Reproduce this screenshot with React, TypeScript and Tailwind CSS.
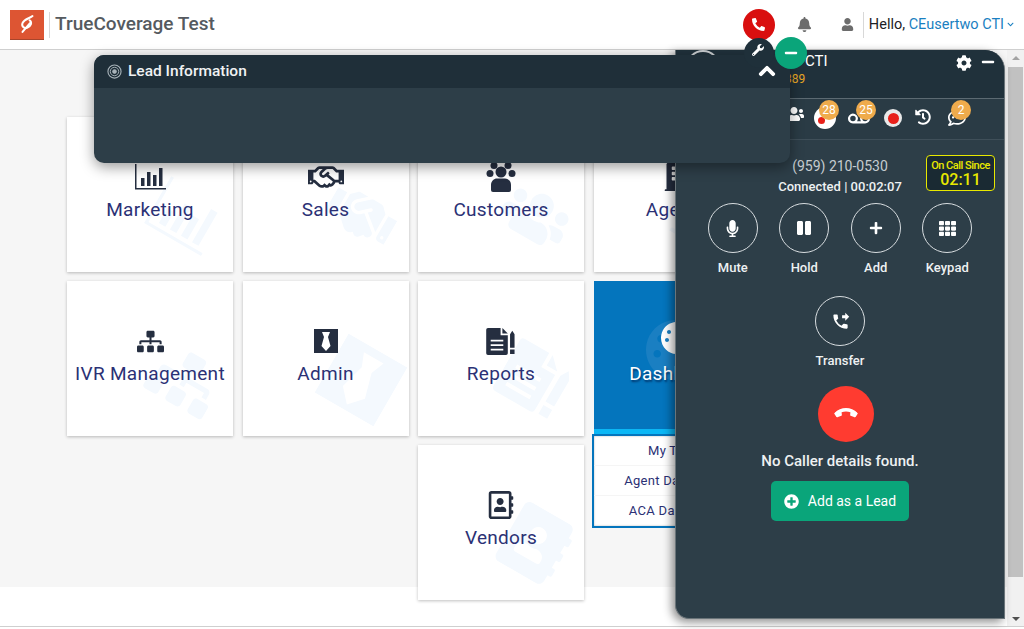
import type { ComponentType } from 'react';
import {
  FaAddressBook, FaBell, FaBuilding, FaChevronDown, FaChevronUp, FaCog, FaHandshake, FaHistory, FaMicrophone, FaMinus,
  FaPalette, FaPause, FaPhoneAlt, FaPlus, FaPlusCircle, FaRegAddressBook, FaRegCommentDots, FaRegHandshake, FaSitemap,
  FaTh, FaUser, FaUsers, FaVoicemail, FaWrench,
} from 'react-icons/fa';
import { MdPhoneForwarded } from 'react-icons/md';

type IconProps = { className?: string };

function ChartIcon({ className }: IconProps) {
  return (
    <svg viewBox="0 0 32 26" className={className} fill="currentColor">
      <path d="M1 0h1.500v24H32v1.500H1z" />
      <rect x="7" y="14" width="3.500" height="8" />
      <rect x="13" y="8" width="3.500" height="14" />
      <rect x="19" y="11" width="3.500" height="11" />
      <rect x="25" y="4" width="3.500" height="18" />
    </svg>
  );
}

function TieIcon({ className }: IconProps) {
  return (
    <svg viewBox="0 0 24 24" className={className} fill="currentColor">
      <path fillRule="evenodd" d="M0 0h24v24H0zM8 3l2 5-2.500 9 4.500 5 4.500-5-2.500-9 2-5z" />
    </svg>
  );
}

function ReportIcon({ className }: IconProps) {
  return (
    <svg viewBox="0 0 34 30" className={className} fill="currentColor">
      <path
        fillRule="evenodd"
        d="M2 0h14v8h8v20a2 2 0 0 1-2 2H2a2 2 0 0 1-2-2V2a2 2 0 0 1 2-2zM5 13v2h14v-2zm0 5v2h14v-2zm0 5v2h14v-2z"
      />
      <path d="M18 0l6 6h-6z" />
      <path d="M29 3l2.500 4v15h-5V7zM26.500 24h5v5h-5z" />
    </svg>
  );
}

function CustomersIcon({ className }: IconProps) {
  return (
    <svg viewBox="0 0 30 30" className={className} fill="currentColor">
      <circle cx="8" cy="3.500" r="3.500" />
      <circle cx="22" cy="3.500" r="3.500" />
      <circle cx="4" cy="11.500" r="3.500" />
      <circle cx="26" cy="11.500" r="3.500" />
      <circle cx="15" cy="10" r="5.500" />
      <path d="M7 30a2 2 0 0 1-2-2v-5c0-4 3-6.500 6-6.500h8c3 0 6 2.500 6 6.500v5a2 2 0 0 1-2 2z" />
    </svg>
  );
}

function LogoMark({ className }: IconProps) {
  return (
    <svg viewBox="0 0 20 24" className={className} fill="none" stroke="#fff" strokeWidth="2.400" strokeLinecap="round">
      <path d="M16 2.500C13 5 6 6 4 11c-1.500 4 2 6.500 5.500 5.500C14 15 16 10 12.500 7.500" />
      <path d="M13 11L4 21.500" />
    </svg>
  );
}

function TargetIcon() {
  return (
    <svg viewBox="0 0 16 16" className="size-[15px]" fill="none" stroke="#a9b4ba">
      <circle cx="8" cy="8" r="7" strokeWidth="1.200" />
      <circle cx="8" cy="8" r="4.500" strokeWidth="1" />
      <circle cx="8" cy="8" r="2" fill="#a9b4ba" />
    </svg>
  );
}

type Card = { label: string; icon: ComponentType<IconProps>; iconClass: string; mark?: ComponentType<IconProps> };

const cards: Card[] = [
  { label: 'Marketing', icon: ChartIcon, iconClass: 'h-[26px] w-[32px]' },
  { label: 'Sales', icon: FaRegHandshake, iconClass: 'size-[36px]', mark: FaHandshake },
  { label: 'Customers', icon: CustomersIcon, iconClass: 'size-[30px]', mark: FaUsers },
  { label: 'Agents', icon: FaBuilding, iconClass: 'size-[28px]' },
  { label: 'IVR Management', icon: FaSitemap, iconClass: 'size-[27px]' },
  { label: 'Admin', icon: TieIcon, iconClass: 'size-[24px]' },
  { label: 'Reports', icon: ReportIcon, iconClass: 'h-[27px] w-[33px]' },
];

function MenuCard({ label, icon: Icon, iconClass, mark }: Card) {
  const Mark = mark ?? Icon;
  return (
    <div className="relative h-[155px] overflow-hidden bg-white shadow-[0_1px_3px_rgba(0,0,0,0.25)]">
      <Mark className="absolute left-[84px] top-[65px] size-[68px] rotate-[30deg] text-[#f4f9fe]" />
      <div className="relative flex h-[126px] flex-col items-center justify-end pb-[21px]">
        <div className="flex h-[36px] items-center text-[#252e40]">
          <Icon className={iconClass} />
        </div>
        <div className="mt-[3px] text-[19px] leading-[24px] tracking-[0.3px] text-[#2b3175]">{label}</div>
      </div>
    </div>
  );
}

function DashboardCard() {
  return (
    <div className="relative h-[153px] border-b-[5px] border-[#0bb7f5] bg-[#0475bd]">
      <FaPalette className="absolute left-[52px] top-[39px] size-[60px] text-[#1a7fc2]" />
      <div className="relative flex h-[126px] flex-col items-center justify-end pb-[21px]">
        <FaPalette className="mb-[8px] size-[32px] text-white" />
        <div className="text-[19px] leading-[24px] tracking-[0.3px] text-white [text-shadow:1px_2px_2px_rgba(0,40,90,0.8)]">
          Dashboard
        </div>
      </div>
      <div className="absolute left-[-2px] top-[153px] h-[94px] w-[170px] border-2 border-[#0475bd] bg-white text-center text-[13px] tracking-[0.3px] text-[#2b3175] shadow-[inset_0_0_2px_rgba(0,0,0,0.3)]">
        <div className="h-[30px] border-b border-[#f5f5f5] pt-[5px]">My Tasks</div>
        <div className="h-[30px] border-b border-[#f5f5f5] pt-[5px]">Agent Dashboard</div>
        <div className="h-[30px] pt-[5px]">ACA Dashboard</div>
      </div>
    </div>
  );
}

function CallAction({ label, icon: Icon, iconClass }: { label: string; icon: ComponentType<IconProps>; iconClass: string }) {
  return (
    <div className="flex w-[71.5px] flex-col items-center">
      <div className="flex size-[50px] items-center justify-center rounded-full border border-[#d8dde0] text-white">
        <Icon className={iconClass} />
      </div>
      <div className="mt-[7px] text-[13px] font-medium leading-[16px] text-[#eef1f2]">{label}</div>
    </div>
  );
}

function Badge({ value, left }: { value: string; left: string }) {
  return (
    <span className={`absolute top-[1px] flex size-[20px] items-center justify-center rounded-full bg-[#efab4c] text-[12px] text-white ${left}`}>
      {value}
    </span>
  );
}

function CtiPanel() {
  return (
    <div className="absolute left-[675px] top-[50px] flex h-[569px] w-[330px] flex-col overflow-hidden rounded-tr-[20px] rounded-bl-[14px] border-r border-b border-l border-[#6a7479] bg-[#2d3e48] shadow-[-3px_3px_10px_rgba(0,0,0,0.45)]">
      <div className="flex h-[49px] shrink-0 items-start border-b border-[#5c6a72] bg-[#20313b]">
        <div className="ml-[10px] size-[34px] rounded-full border-2 border-[#c9cdd0] bg-[#20313b]" />
        <div className="ml-[9px] mt-[1px]">
          <div className="text-[15px] leading-[20px] text-white">CEusertwo CTI</div>
          <div className="ml-[56px] text-[12px] leading-[16px] text-[#e9a826]">389</div>
        </div>
        <FaCog className="absolute left-[280px] top-[5px] size-[16px] text-white" />
        <FaMinus className="absolute left-[305px] top-[5px] size-[14px] text-white" />
      </div>
      <div className="relative flex h-[41px] shrink-0 items-center border-b border-[#3f4f59] bg-[#2a3b45]">
        <FaUsers className="absolute left-[108px] top-[5px] size-[20px] text-white" />
        <div className="absolute left-[138px] top-[8px] size-[22px] rounded-full bg-white">
          <span className="absolute left-[4px] top-[10px] size-[7px] rounded-full bg-[#e8201a]" />
        </div>
        <FaVoicemail className="absolute left-[172px] top-[8px] size-[22px] text-white" />
        <div className="absolute left-[208px] top-[10px] flex size-[18px] items-center justify-center rounded-full bg-[#e9e9e9]">
          <span className="size-[11px] rounded-full bg-[#e8201a]" />
        </div>
        <FaHistory className="absolute left-[239px] top-[10px] size-[16px] text-white" />
        <FaRegCommentDots className="absolute left-[272px] top-[10px] size-[18px] text-white" />
        <Badge value="28" left="left-[143px]" />
        <Badge value="25" left="left-[180px]" />
        <Badge value="2" left="left-[275px]" />
      </div>
      <div className="relative flex flex-col items-center pt-[16px]">
        <div className="text-[14px] leading-[20px] text-[#c5ccd0]">(959) 210-0530</div>
        <div className="mt-[1px] text-[13px] font-medium leading-[19px] text-[#eef1f2]">Connected | 00:02:07</div>
        <div className="absolute left-[250px] top-[15px] flex h-[36px] w-[69px] flex-col items-center rounded-[4px] border border-[#e8e800] bg-[#1a2a33] pt-[3px] text-[#e8e800]">
          <div className="text-[11px] font-medium leading-[13px] tracking-[-0.5px]">On Call Since</div>
          <div className="text-[16px] font-medium leading-[15px]">02:11</div>
        </div>
        <div className="mt-[7px] flex">
          <CallAction label="Mute" icon={FaMicrophone} iconClass="size-[17px]" />
          <CallAction label="Hold" icon={FaPause} iconClass="size-[16px]" />
          <CallAction label="Add" icon={FaPlus} iconClass="size-[14px]" />
          <CallAction label="Keypad" icon={FaTh} iconClass="size-[17px]" />
        </div>
        <div className="mt-[20px]">
          <CallAction label="Transfer" icon={MdPhoneForwarded} iconClass="size-[19px]" />
        </div>
        <div className="ml-[12px] mt-[17px] flex size-[56px] items-center justify-center rounded-full bg-[#ff3b30]">
          <FaPhoneAlt className="size-[18px] rotate-[135deg] text-white" />
        </div>
        <div className="mt-[9px] text-[15px] font-medium leading-[20px] text-[#eef1f2]">No Caller details found.</div>
        <div className="mt-[10px] flex h-[40px] w-[138px] items-center justify-center gap-[9px] rounded-[5px] bg-[#0aa57a] text-[14px] text-white">
          <FaPlusCircle className="size-[15px]" />
          Add as a Lead
        </div>
      </div>
    </div>
  );
}

function LeadPanel() {
  return (
    <div className="absolute left-[94px] top-[55px] h-[108px] w-[696px] overflow-hidden rounded-[10px] bg-[#2d3e48] shadow-[0_4px_14px_rgba(0,0,0,0.4)]">
      <div className="flex h-[33px] items-center gap-[6px] bg-[#1f2f39] pl-[13px] text-[15.5px] font-medium text-[#f0f2f3]">
        <TargetIcon />
        Lead Information
      </div>
    </div>
  );
}

function Scrollbar() {
  return (
    <div className="absolute right-0 top-[50px] flex h-[576px] w-[17px] flex-col items-center bg-[#f1f1f1]">
      <div className="mt-[6px] h-0 w-0 border-x-[4px] border-b-[4px] border-x-transparent border-b-[#a3a3a3]" />
      <div className="mt-[7px] h-[510px] w-[15px] bg-[#c1c1c1]" />
      <div className="mt-auto mb-[5px] h-0 w-0 border-x-[4px] border-t-[4px] border-x-transparent border-t-[#505050]" />
    </div>
  );
}

export default function App() {
  return (
    <div className="relative h-[629px] w-[1024px] overflow-hidden bg-white font-['Roboto',sans-serif]">
      <header className="flex h-[50px] items-center border-b border-[#cfcfcf] bg-white pl-[10px] pr-[10px]">
        <div className="flex h-[30px] w-[34px] items-center justify-center border-b border-[#a8452c] bg-[#dd5533]">
          <LogoMark className="h-[20px] w-[17px]" />
        </div>
        <div className="ml-[5px] h-[26px] w-px bg-[#d8d8d8]" />
        <div className="ml-[5px] text-[19px] font-medium text-[#555a60]">TrueCoverage Test</div>
        <div className="ml-auto flex size-[32px] items-center justify-center rounded-full bg-[#d90f0f] text-white">
          <FaPhoneAlt className="size-[13px]" />
        </div>
        <FaBell className="ml-[22px] size-[15px] text-[#6c6c6c]" />
        <FaUser className="ml-[29px] size-[13px] text-[#6c6c6c]" />
        <div className="ml-[9px] h-[26px] w-px bg-[#d8d8d8]" />
        <div className="ml-[5px] flex items-center whitespace-nowrap text-[14.5px] text-[#1c2024]">
          Hello,&nbsp;<span className="text-[#1a7fc1]">CEusertwo CTI</span>
          <FaChevronDown className="ml-[3px] size-[7px] text-[#1a7fc1]" />
        </div>
      </header>

      <main className="h-[537px] bg-[#f6f6f6] pl-[67px] pt-[67px]">
        <div className="grid w-[693px] grid-cols-[166px_166px_166px_166px] gap-x-[9.500px] gap-y-[9px]">
          {cards.map((card) => (
            <MenuCard key={card.label} {...card} />
          ))}
          <DashboardCard />
          <div className="col-start-3">
            <MenuCard label="Vendors" icon={FaRegAddressBook} iconClass="size-[28px]" mark={FaAddressBook} />
          </div>
        </div>
      </main>
      <div className="absolute bottom-[2px] left-0 h-px w-full bg-[#cfcfcf]" />

      <Scrollbar />
      <CtiPanel />
      <LeadPanel />

      <div className="absolute left-[744px] top-[38px] flex size-[30px] items-center justify-center rounded-full bg-[#1f303a] text-white">
        <FaWrench className="size-[12px] translate-x-[-1px] translate-y-[-3px]" />
      </div>
      <div className="absolute left-[775px] top-[37px] flex size-[32px] items-center justify-center rounded-full bg-[#0aa57a] text-white">
        <FaMinus className="size-[14px]" />
      </div>
      <FaChevronUp className="absolute left-[758px] top-[62px] size-[18px] stroke-white stroke-[30] text-white" />
    </div>
  );
}
